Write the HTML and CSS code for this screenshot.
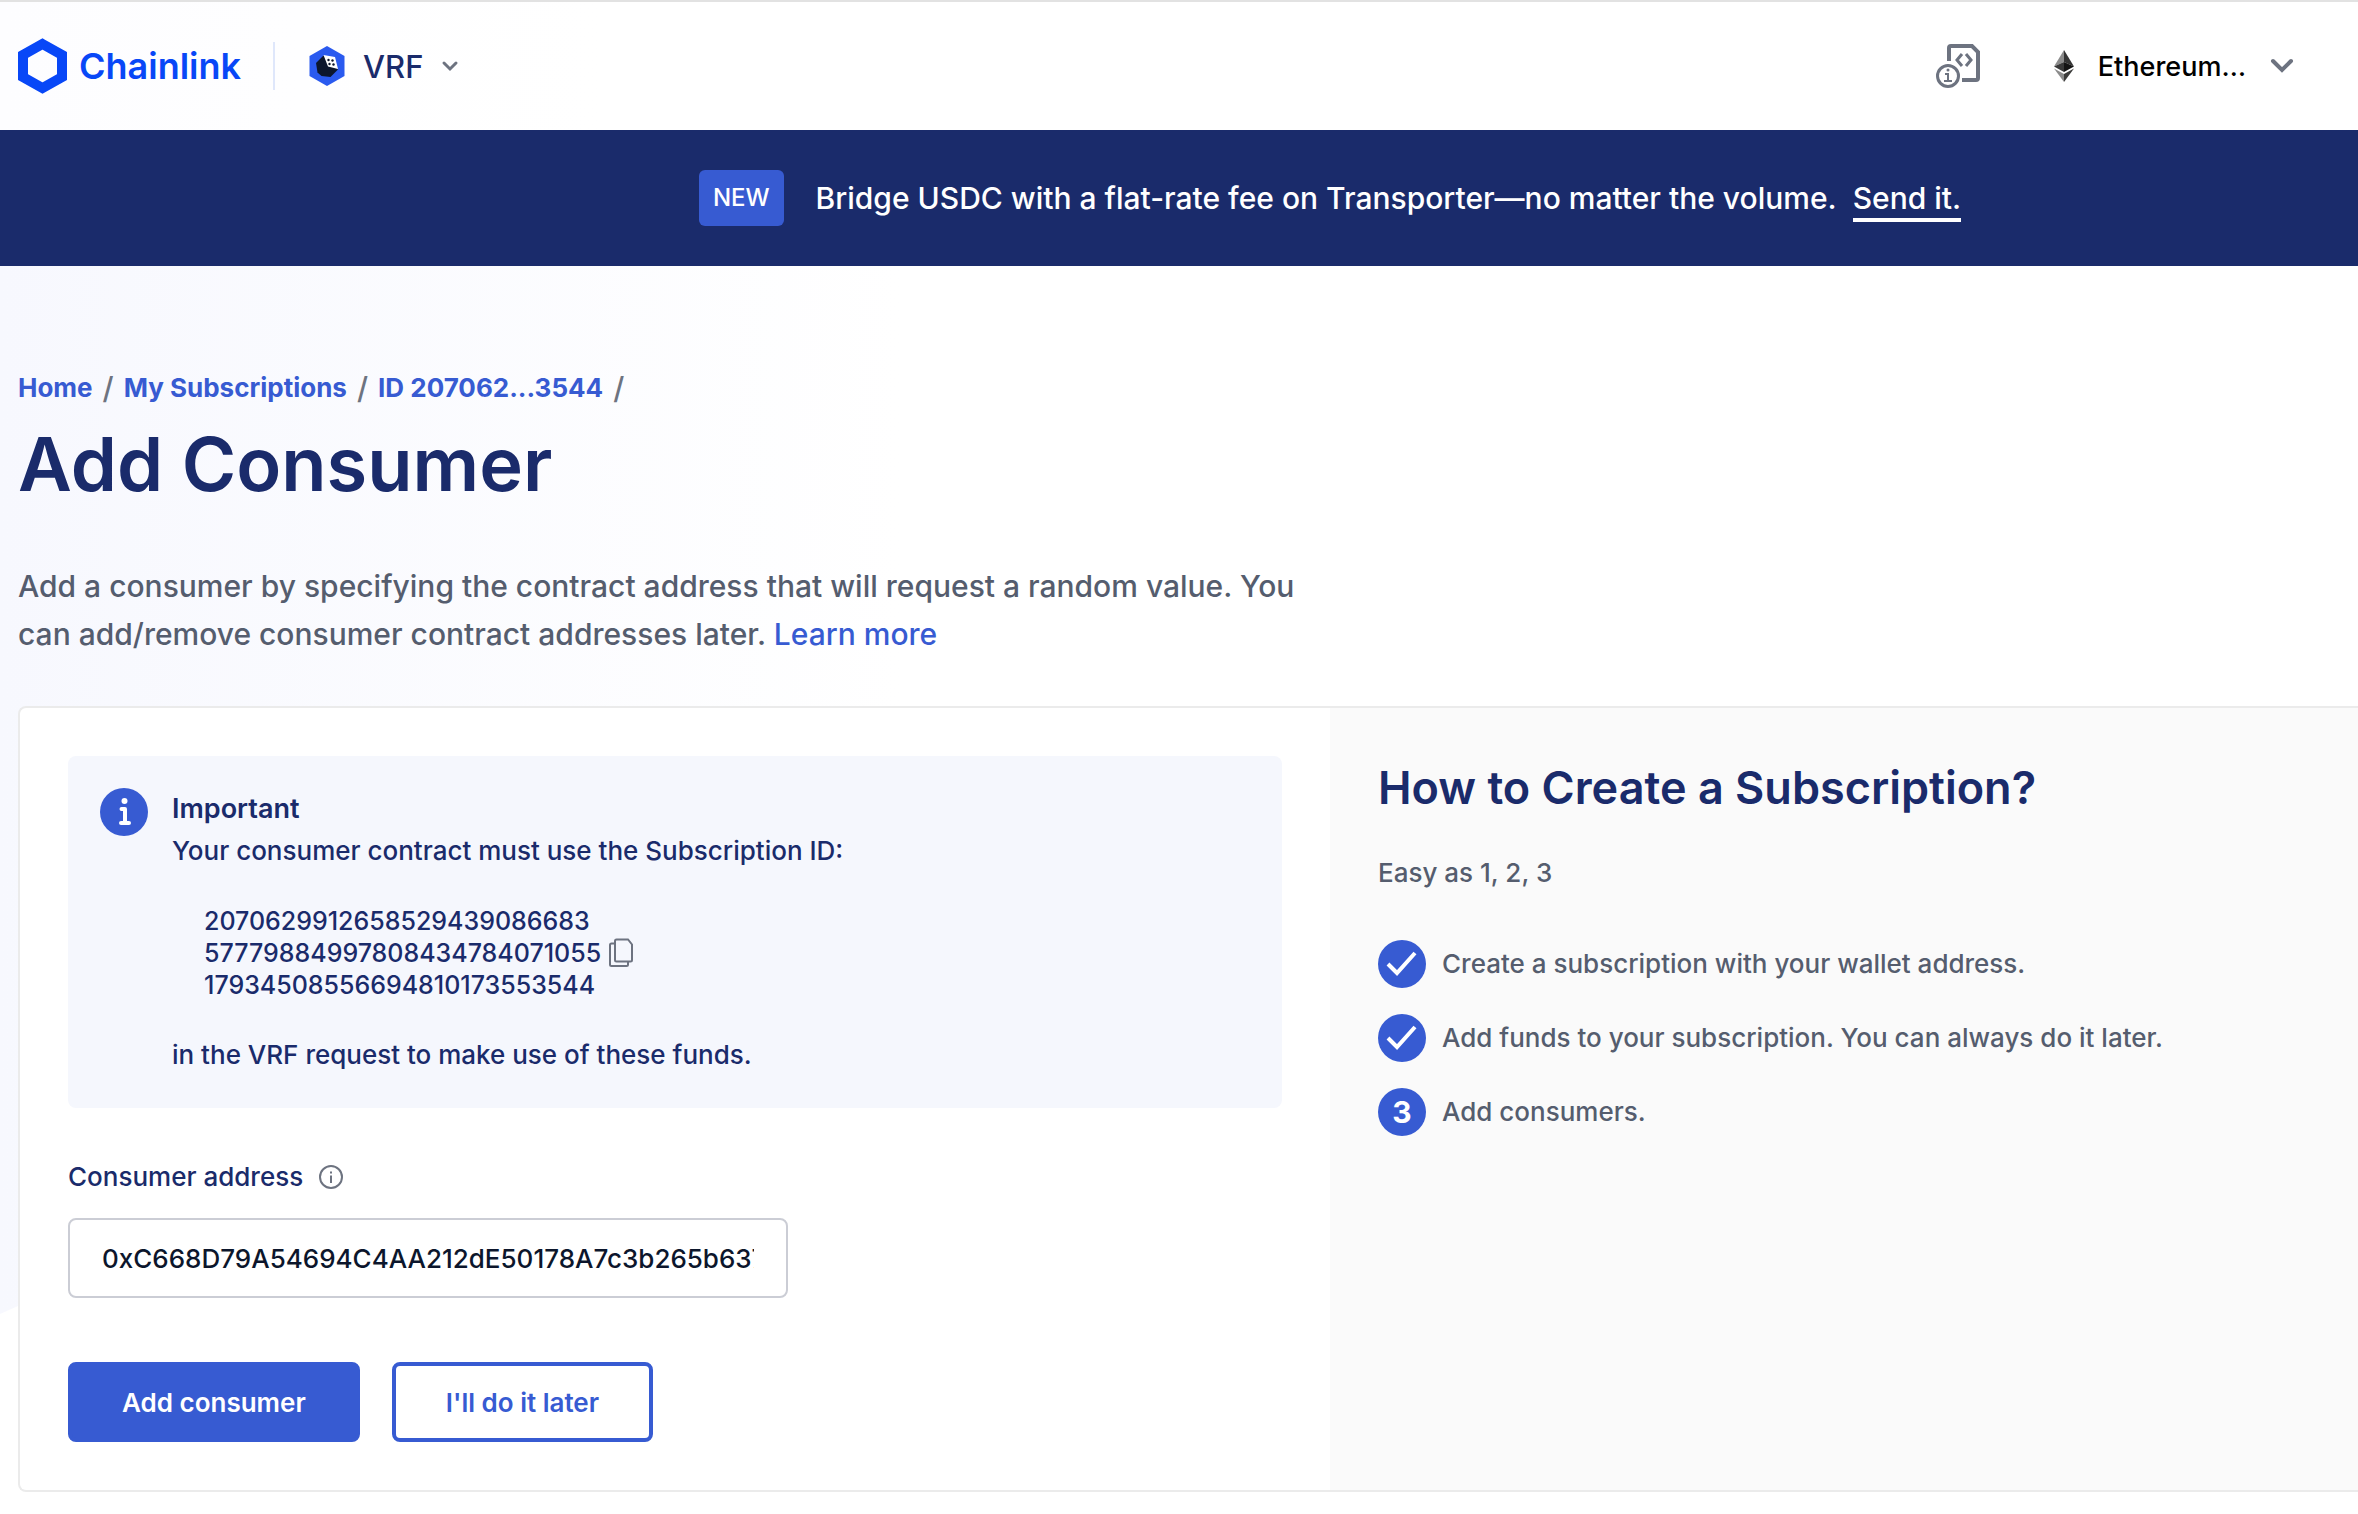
FILE: index.html
```html
<!DOCTYPE html>
<html lang="en">
<head>
<meta charset="utf-8">
<title>Add Consumer | Chainlink VRF</title>
<link rel="stylesheet" href="styles.css">
</head>
<body>
<header class="topbar">
  <a class="brand" href="#" aria-label="Chainlink home">
    <svg width="50" height="56" viewBox="0 0 50 56" aria-hidden="true"><path fill="none" stroke="#0847f7" stroke-width="10" d="M24.500 6 44 17v22L24.500 50 5 39V17z"/></svg>
    <span class="brand-name">Chainlink</span>
  </a>
  <button class="product" type="button">
    <svg width="36" height="40" viewBox="0 0 36 40" aria-hidden="true"><path fill="#2a5aef" d="M18 0l17.500 10v20L18 40 .5 30V10z"/><path fill="#0c162c" d="M14.500 9.500 7 17l1.500 9.500 4 3.500 9 1 7.500-7.500z"/><path fill="#fff" d="m14.500 9 11.500 2 3 12-10-2.500z"/><g fill="#0c162c"><circle cx="19.500" cy="14" r="1.200"/><circle cx="23.500" cy="14.500" r="1.200"/><circle cx="20.500" cy="18" r="1.200"/><circle cx="24.500" cy="18.500" r="1.200"/></g></svg>
    <span>VRF</span>
    <svg class="chev" width="18" height="12" viewBox="0 0 18 12" aria-hidden="true"><path fill="none" stroke="#6d7380" stroke-width="3" stroke-linecap="round" d="m3 3 6 6 6-6"/></svg>
  </button>
  <button class="docs" type="button" aria-label="Contract info">
    <svg width="44" height="44" viewBox="0 0 44 44" fill="none" stroke="#6d7380" aria-hidden="true"><path stroke-width="4" d="M13 17V4q0-2 2-2h21l6 6v26q0 2-2 2H26"/><path stroke-width="3" d="m26 10-5 6 5 6m4-12 5 6-5 6"/><circle cx="12" cy="32" r="10.500" stroke-width="3"/><path stroke-width="2" d="M9 30h3v7M8 37h8"/><circle cx="12" cy="26" r="1.500" fill="#6d7380" stroke="none"/></svg>
  </button>
  <button class="network" type="button">
    <svg width="20" height="32" viewBox="0 0 20 32" aria-hidden="true"><path fill="#8c8c8c" d="M10 0 0 16.500 10 12z"/><path fill="#343434" d="M10 0v12l10 4.500z"/><path fill="#393939" d="M10 12 0 16.500 10 22z"/><path fill="#141414" d="M10 12v10l10-5.500z"/><path fill="#8c8c8c" d="M0 18.500 10 32v-8z"/><path fill="#3c3c3b" d="m20 18.500-10 5.500v8z"/></svg>
    <span>Ethereum…</span>
    <svg class="chev" width="24" height="16" viewBox="0 0 24 16" aria-hidden="true"><path fill="none" stroke="#6d7380" stroke-width="4" stroke-linecap="round" d="m3 3 9 9 9-9"/></svg>
  </button>
</header>

<aside class="banner">
  <span class="tag">NEW</span>
  <p class="banner-text"><span>Bridge USDC with a flat-rate fee on Transporter—no matter the volume.</span><a href="#">Send it.</a></p>
</aside>

<main class="page">
  <nav class="crumbs" aria-label="Breadcrumb">
    <a href="#">Home</a><span>/</span><a href="#">My Subscriptions</a><span>/</span><a href="#">ID 207062...3544</a><span>/</span>
  </nav>
  <h1>Add Consumer</h1>
  <p class="lead">Add a consumer by specifying the contract address that will request a random value. You can add/remove consumer contract addresses later. <a href="#">Learn more</a></p>

  <div class="card">
    <form class="panel">
      <section class="notice">
        <svg width="48" height="48" viewBox="0 0 48 48" aria-hidden="true"><circle cx="24" cy="24" r="24" fill="#375bd2"/><circle cx="24.500" cy="13" r="3" fill="#fff"/><path fill="none" stroke="#fff" stroke-width="4" stroke-linecap="round" stroke-linejoin="round" d="M21.500 21H25v14m-4 0h8"/></svg>
        <div class="notice-body">
          <h2>Important</h2>
          <p>Your consumer contract must use the Subscription ID:</p>
          <div class="sub-id">
            <span>2070629912658529439086683<br>57779884997808434784071055<br>17934508556694810173553544</span>
            <button type="button" class="copy" aria-label="Copy subscription ID"><svg width="24" height="30" viewBox="0 0 24 30" fill="none" stroke="#6d7380" stroke-width="2" aria-hidden="true"><path d="M6 3q0-1.500 1.500-1.500H19l4 5V22q0 1.500-1.500 1.500h-14Q6 23.500 6 22z"/><path d="M6 5.500H2.500Q1 5.500 1 7v19.500Q1 28 2.500 28h15q1.500 0 1.500-1.500v-3"/></svg></button>
          </div>
          <p>in the VRF request to make use of these funds.</p>
        </div>
      </section>
      <div class="label-row">
        <label for="address">Consumer address</label>
        <svg width="24" height="24" viewBox="0 0 24 24" fill="none" stroke="#6d7380" stroke-width="2" aria-hidden="true"><circle cx="12" cy="12" r="11"/><path d="M12 10.500V18M12 6.500V8.500"/></svg>
      </div>
      <input id="address" type="text" value="0xC668D79A54694C4AA212dE50178A7c3b265b637d">
      <div class="actions">
        <button class="btn primary" type="button">Add consumer</button>
        <button class="btn outline" type="button">I'll do it later</button>
      </div>
    </form>
    <section class="guide">
      <h2>How to Create a Subscription?</h2>
      <p>Easy as 1, 2, 3</p>
      <ol>
        <li><span class="dot"><svg width="32" height="26" viewBox="0 0 32 26" aria-hidden="true"><path fill="none" stroke="#fff" stroke-width="4" d="m2 13 9 9L29 2"/></svg></span>Create a subscription with your wallet address.</li>
        <li><span class="dot"><svg width="32" height="26" viewBox="0 0 32 26" aria-hidden="true"><path fill="none" stroke="#fff" stroke-width="4" d="m2 13 9 9L29 2"/></svg></span>Add funds to your subscription. You can always do it later.</li>
        <li><span class="dot">3</span>Add consumers.</li>
      </ol>
    </section>
  </div>
</main>
</body>
</html>
```
FILE: styles.css
```css
* { box-sizing: border-box; }
body, h1, h2, p, ol { margin: 0; padding: 0; }
body {
  background: #fff;
  color: #1a2b6b;
  font-family: Inter, "Liberation Sans", sans-serif;
  font-size: 26px;
  font-weight: 500;
  overflow-x: hidden;
}
button { font: inherit; color: inherit; background: none; border: 0; padding: 0; cursor: pointer; }
a { color: #375bd2; text-decoration: none; }
svg { display: block; flex: none; }

.topbar {
  display: flex;
  align-items: center;
  height: 130px;
  padding: 0 64px 0 18px;
  border-top: 2px solid #e2e2e2;
  background: linear-gradient(90deg, #fdfdff, #fff 600px);
}
.brand { display: flex; align-items: center; gap: 11px; padding-right: 32px; color: #0847f7; }
.brand-name { font-size: 36px; font-weight: 600; }
.product { display: flex; align-items: center; height: 48px; padding-left: 34px; gap: 18px; border-left: 2px solid #dfe7fb; font-size: 31px; }
.docs { margin-left: auto; margin-right: 74px; }
.network { display: flex; align-items: center; gap: 24px; color: #000; font-size: 27px; }

.banner {
  display: flex;
  align-items: center;
  justify-content: center;
  gap: 32px;
  height: 136px;
  padding-left: 302px;
  color: #fff;
  background: #1a2b6b;
}
.tag { padding: 12px 14px; border-radius: 6px; background: #375bd2; font-size: 24px; line-height: 32px; }
.banner-text { display: flex; gap: 16px; padding-top: 4px; font-size: 30px; line-height: 40px; }
.banner-text a { color: #fff; border-bottom: 4px solid #fff; }

.page { position: relative; padding: 98px 0 24px 18px; }
.page::before {
  content: "";
  position: absolute;
  z-index: -1;
  inset: 0 0 auto;
  height: 1048px;
  background: linear-gradient(90deg, #f7f8fe, #fff 900px);
  clip-path: polygon(0 0, 100% 0, 100% 0, 0 100%);
}
.crumbs { display: flex; gap: 10px; line-height: 48px; font-weight: 700; }
.crumbs span { color: #6d7380; font-size: 30px; font-weight: 500; }
h1 { font-size: 74px; line-height: 104px; font-weight: 600; }
.lead { max-width: 1300px; margin: 46px 0 48px; color: #555d6e; font-size: 30px; line-height: 48px; }

.card {
  display: grid;
  grid-template-columns: 1310px 1fr;
  min-height: 784px;
  border: 2px solid #ebebeb;
  border-right: 0;
  border-radius: 8px 0 0 8px;
  background: #fff;
  overflow: hidden;
}
.panel { padding: 48px; }
.notice { display: flex; gap: 24px; padding: 32px; border-radius: 8px; background: #f5f7fd; }
.notice h2 { font-size: 27px; line-height: 42px; font-weight: 600; }
.notice p { line-height: 42px; }
.sub-id { display: flex; align-items: center; gap: 8px; padding: 33px 32px; font-size: 25px; line-height: 32px; }
.label-row { display: flex; align-items: center; gap: 16px; margin: 48px 0 20px; line-height: 42px; }
#address {
  display: block;
  width: 720px;
  height: 80px;
  padding: 0 32px;
  border: 2px solid #cbcdd5;
  border-radius: 8px;
  background: #fff;
  color: #0c162c;
  font: inherit;
}
.actions { display: flex; gap: 32px; margin-top: 64px; }
.btn { height: 80px; padding: 0 50px; border: 4px solid #375bd2; border-radius: 8px; font-weight: 600; }
.primary { background: #375bd2; color: #fff; }
.outline { color: #375bd2; }

.guide { padding: 48px; background: #fafafa; color: #555d6e; }
.guide h2 { color: #1a2b6b; font-size: 45px; line-height: 64px; font-weight: 600; }
.guide p { margin-top: 32px; line-height: 42px; }
.guide ol { display: grid; gap: 26px; margin-top: 46px; list-style: none; }
.guide li { display: flex; align-items: center; gap: 16px; line-height: 48px; }
.dot { display: flex; align-items: center; justify-content: center; width: 48px; height: 48px; border-radius: 50%; background: #375bd2; color: #fff; font-size: 30px; font-weight: 700; }
```
